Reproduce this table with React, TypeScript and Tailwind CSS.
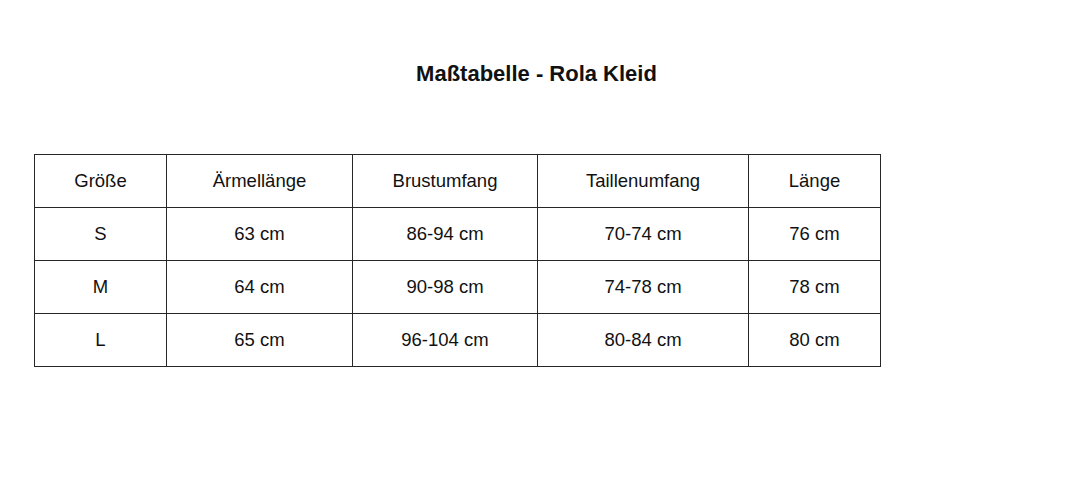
const headers = ['Größe', 'Ärmellänge', 'Brustumfang', 'Taillenumfang', 'Länge'];
const rows = [
  ['S', '63 cm', '86-94 cm', '70-74 cm', '76 cm'],
  ['M', '64 cm', '90-98 cm', '74-78 cm', '78 cm'],
  ['L', '65 cm', '96-104 cm', '80-84 cm', '80 cm'],
];
const widths = ['w-[132px]', 'w-[186px]', 'w-[185px]', 'w-[211px]', 'w-[132px]'];

export default function App() {
  return (
    <div className="w-[1080px] h-[480px] bg-white text-[#111] font-['Liberation_Sans',Arial,sans-serif] flex flex-col">
      <h1 className="w-[1073px] text-center font-bold text-[22px] leading-none pt-[63px]">Maßtabelle - Rola Kleid</h1>
      <table className="mt-[69px] ml-[34px] border-collapse table-fixed w-[847px] text-[18.5px]">
        <thead>
          <tr className="h-[53px]">
            {headers.map((h, i) => (
              <th key={h} className={`${widths[i]} border border-[#262626] font-normal text-center`}>{h}</th>
            ))}
          </tr>
        </thead>
        <tbody>
          {rows.map((r) => (
            <tr key={r[0]} className="h-[53px]">
              {r.map((c, i) => (
                <td key={i} className="border border-[#262626] text-center">{c}</td>
              ))}
            </tr>
          ))}
        </tbody>
      </table>
    </div>
  );
}
